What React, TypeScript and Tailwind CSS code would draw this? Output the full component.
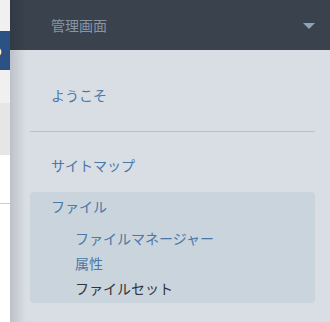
const jp = "font-['Noto_Sans_CJK_JP','Noto_Sans',sans-serif]";

type Item = { label: string; active?: boolean };

const fileItems: Item[] = [
  { label: "ファイルマネージャー" },
  { label: "属性" },
  { label: "ファイルセット", active: true },
];

export default function App() {
  return (
    <div className={`flex h-[322px] w-[330px] overflow-hidden ${jp}`}>
      <BackPage />
      <aside className="relative flex flex-1 flex-col bg-[#d9dee5]">
        {/* left edge shadow over the page behind */}
        <div className="pointer-events-none absolute inset-y-0 left-0 z-10 w-[16px] bg-gradient-to-r from-[rgba(0,0,0,0.13)] to-transparent" />
        <header className="flex h-[50px] items-center justify-between bg-[#39424d] pl-[41px] pr-[15px]">
          <span className="text-[14px] leading-none text-[#8895a2]">管理画面</span>
          <svg width="12" height="6" viewBox="0 0 12 6" className="mt-[1px]">
            <path d="M0 0h12L6 6z" fill="#8ea2b8" />
          </svg>
        </header>

        <nav className="flex flex-col pl-[20px] pr-[15px]">
          <div className="mt-[26px] flex h-[40px] items-center pl-[21px] pb-[1px] text-[14px] text-[#4b78a7]">
            ようこそ
          </div>
          <div className="mt-[15px] h-px bg-[#b9c0c8]" />
          <div className="mt-[14px] flex h-[40px] items-center pl-[21px] pb-[1px] text-[14px] text-[#4b78a7]">
            サイトマップ
          </div>
          <div className="mt-[6px] rounded-[4px] bg-[#c9d4dd] pb-[2px]">
            <div className="flex h-[29px] items-center pl-[21px] pb-[1px] text-[14px] text-[#4b78a7]">
              ファイル
            </div>
            <ul className="mt-[5px] flex flex-col">
              {fileItems.map((it) => (
                <li
                  key={it.label}
                  className={
                    it.active
                      ? "flex h-[25px] items-center pl-[45px] pb-[1px] text-[14px] text-[#2f3338]"
                      : "flex h-[25px] items-center pl-[45px] pb-[1px] text-[14px] text-[#4b78a7]"
                  }
                >
                  {it.label}
                </li>
              ))}
            </ul>
          </div>
        </nav>
      </aside>
    </div>
  );
}

// the page peeking out from behind the drawer
function BackPage() {
  return (
    <div className="flex w-[10px] shrink-0 flex-col overflow-hidden bg-white">
      <div className="h-[31px] bg-[#f0f0f0]" />
      <div className="flex h-[39px] items-center bg-[#2b5283]">
        <span className="ml-[-7px] font-['Liberation_Sans',sans-serif] text-[14px] font-bold leading-none text-white">
          o
        </span>
      </div>
      <div className="h-[33px] bg-[#f0f0f0]" />
      <div className="h-[52px] bg-[#e6e6e6]" />
      <div className="h-[48px] bg-white" />
      <div className="h-px bg-[#cccccc]" />
      <div className="flex-1 bg-white" />
    </div>
  );
}
